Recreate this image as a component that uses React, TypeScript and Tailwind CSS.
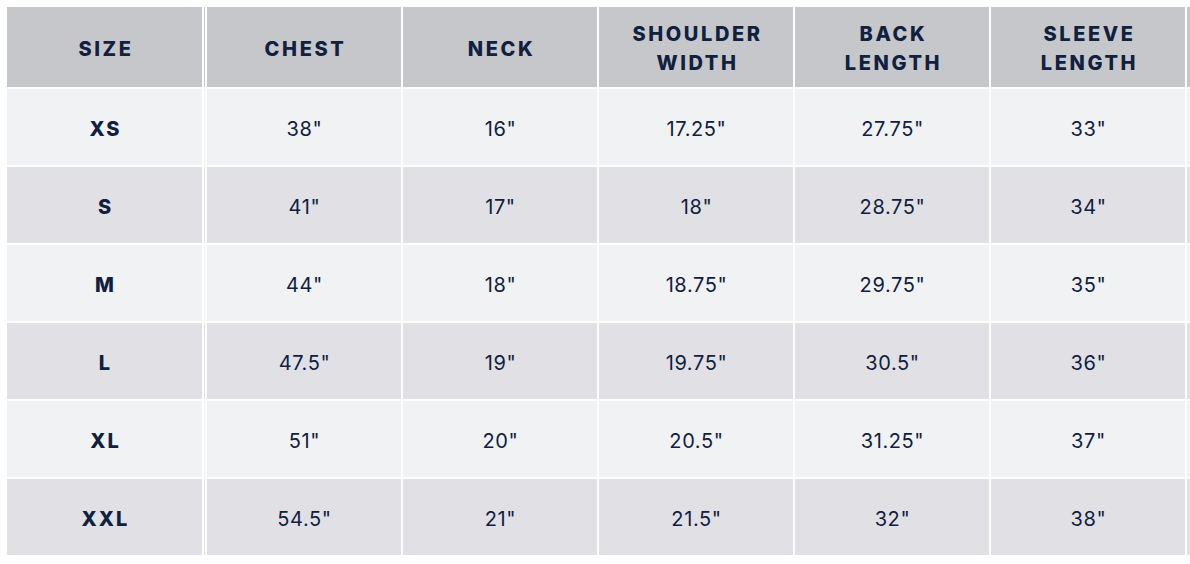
import React from "react";

const headers: string[][] = [
  ["SIZE"],
  ["CHEST"],
  ["NECK"],
  ["SHOULDER", "WIDTH"],
  ["BACK", "LENGTH"],
  ["SLEEVE", "LENGTH"],
  [],
];

const rows: string[][] = [
  ["XS", '38"', '16"', '17.25"', '27.75"', '33"', ""],
  ["S", '41"', '17"', '18"', '28.75"', '34"', ""],
  ["M", '44"', '18"', '18.75"', '29.75"', '35"', ""],
  ["L", '47.5"', '19"', '19.75"', '30.5"', '36"', ""],
  ["XL", '51"', '20"', '20.5"', '31.25"', '37"', ""],
  ["XXL", '54.5"', '21"', '21.5"', '32"', '38"', ""],
];

export default function App() {
  return (
    <div
      className="w-[1190px] h-[564px] overflow-hidden bg-white pl-[7px] pt-[7px]"
      style={{ fontFamily: "Inter, 'Liberation Sans', sans-serif" }}
    >
      <div className="grid grid-cols-[195px_1px_194px_194px_194px_194px_194px_194px] grid-rows-[80px_76px_76px_76px_76px_76px_76px] gap-[2px] w-max text-[#10203f]">
        {headers.map((h, i) => (
          <React.Fragment key={i}>
            <div className="bg-[#c6c7cb] flex flex-col items-center justify-center pt-[4px] pl-[3px] font-extrabold text-[20px] tracking-[0.13em] leading-[29px] text-center">
              {h.map((l) => (
                <span key={l}>{l}</span>
              ))}
            </div>
            {i === 0 && <div className="bg-[#c6c7cb]" />}
          </React.Fragment>
        ))}
        {rows.map((r, ri) => {
          const bg = ri % 2 === 0 ? "bg-[#f1f2f4]" : "bg-[#e1e1e5]";
          return (
            <React.Fragment key={ri}>
              {r.map((c, ci) => (
                <React.Fragment key={ci}>
                  <div
                    className={`${bg} flex items-center justify-center pt-[4px] text-[20px] ${
                      ci === 0
                        ? "font-extrabold tracking-[0.1em] pl-[2px]"
                        : "font-normal tracking-[0.03em] pl-[1px]"
                    }`}
                  >
                    {c}
                  </div>
                  {ci === 0 && <div className={bg} />}
                </React.Fragment>
              ))}
            </React.Fragment>
          );
        })}
      </div>
    </div>
  );
}
